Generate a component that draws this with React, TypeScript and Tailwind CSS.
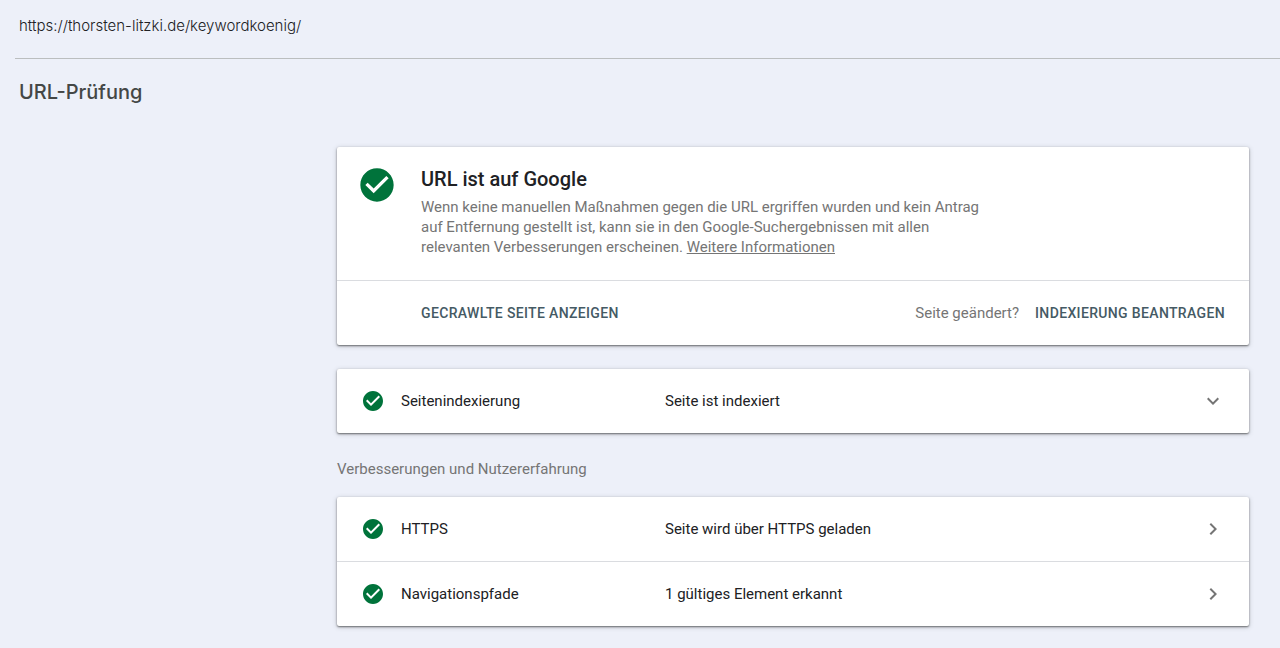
import { MdCheckCircle, MdChevronRight, MdExpandMore } from 'react-icons/md'

const inspectedUrl = 'https://thorsten-litzki.de/keywordkoenig/'

const enhancements = [
  { name: 'HTTPS', status: 'Seite wird über HTTPS geladen' },
  { name: 'Navigationspfade', status: '1 gültiges Element erkannt' },
]

const cardClass =
  'overflow-hidden rounded-xs bg-white shadow-[0_1px_2px_0_rgba(0,0,0,0.5),0_1px_5px_0_rgba(60,64,67,0.25)]'

function ResultRow({ name, status, expandable = false }: { name: string; status: string; expandable?: boolean }) {
  const Arrow = expandable ? MdExpandMore : MdChevronRight

  return (
    <button type="button" className="flex h-16 w-full cursor-pointer items-center px-6 text-left text-[#202124]">
      <MdCheckCircle className="mr-4 h-6 w-6 shrink-0 text-[#00733b]" />
      <span className="w-66 shrink-0">{name}</span>
      <span className="flex-1">{status}</span>
      <Arrow className="h-6 w-6 shrink-0 text-[#757575]" />
    </button>
  )
}

export default function App() {
  return (
    <div className="min-h-screen bg-[#edf0f9] font-['Roboto',sans-serif] text-[15px] leading-5 text-[#757575]">
      <header className="ml-[15px] border-b border-[#bbbebf] px-1 pt-3.5 pb-5">
        <p className="font-['Inter',sans-serif] text-[15px] leading-6 font-light text-[#202124]">{inspectedUrl}</p>
      </header>

      <h1 className="px-[19px] pt-[19px] font-['Inter',sans-serif] text-xl leading-7 font-medium text-[#444746]">
        URL-Prüfung
      </h1>

      <main className="mt-[41px] mr-[31px] ml-[337px] pb-5">
        <section className={cardClass}>
          <div className="flex gap-6 border-b border-[#dadce0] pt-[18px] pr-6 pb-[23px] pl-5">
            <MdCheckCircle className="h-10 w-10 shrink-0 text-[#00733b]" />
            <div>
              <h2 className="mb-1 text-xl leading-7 font-medium text-[#202124]">URL ist auf Google</h2>
              <p className="max-w-[568px]">
                Wenn keine manuellen Maßnahmen gegen die URL ergriffen wurden und kein Antrag auf Entfernung gestellt
                ist, kann sie in den Google-Suchergebnissen mit allen relevanten Verbesserungen erscheinen.{' '}
                <a href="#" className="underline">
                  Weitere Informationen
                </a>
              </p>
            </div>
          </div>
          <div className="flex h-16 items-center justify-between pr-6 pl-21">
            <button type="button" className="cursor-pointer text-sm font-medium tracking-wide text-[#455a64] uppercase">
              Gecrawlte Seite anzeigen
            </button>
            <div className="flex items-center gap-4">
              <span>Seite geändert?</span>
              <button
                type="button"
                className="cursor-pointer text-sm font-medium tracking-wide text-[#455a64] uppercase"
              >
                Indexierung beantragen
              </button>
            </div>
          </div>
        </section>

        <section className={`mt-6 ${cardClass}`}>
          <ResultRow name="Seitenindexierung" status="Seite ist indexiert" expandable />
        </section>

        <h3 className="mt-6 mb-4 leading-6">Verbesserungen und Nutzererfahrung</h3>
        <section className={`divide-y divide-[#dadce0] ${cardClass}`}>
          {enhancements.map((item) => (
            <div key={item.name}>
              <ResultRow name={item.name} status={item.status} />
            </div>
          ))}
        </section>
      </main>
    </div>
  )
}
